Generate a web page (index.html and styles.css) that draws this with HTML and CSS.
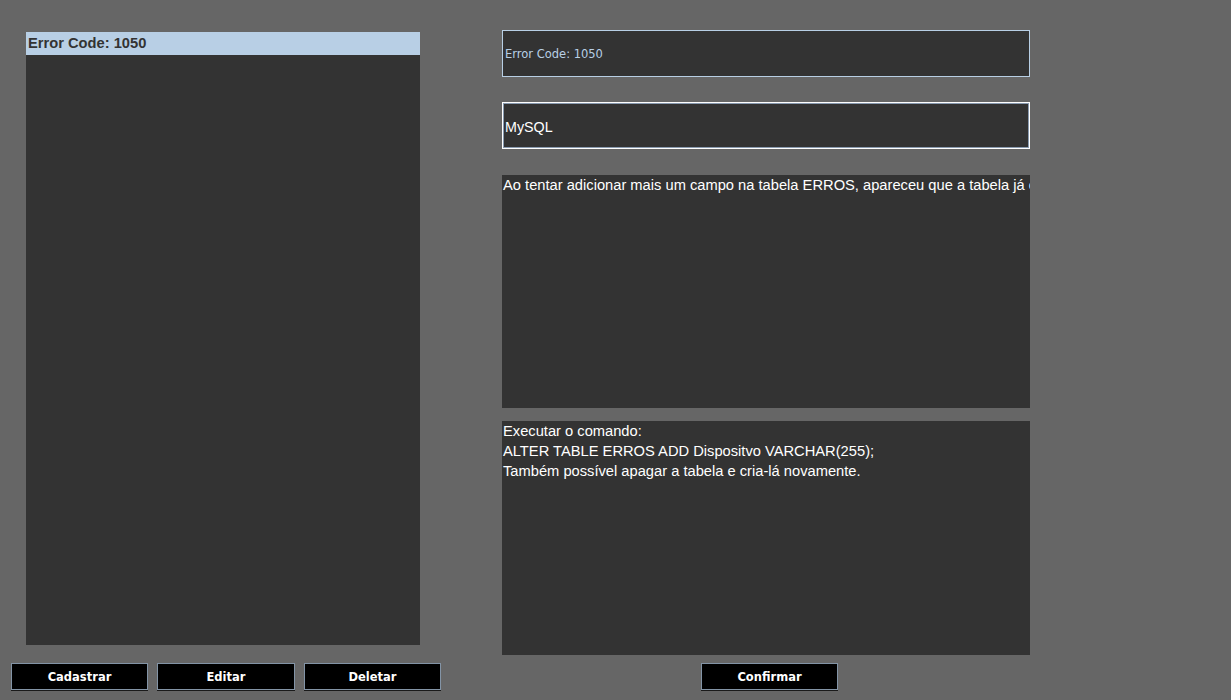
FILE: index.html
```html
<!DOCTYPE html>
<html lang="pt">
<head>
<meta charset="utf-8">
<title>Erros</title>
<link rel="stylesheet" href="styles.css">
</head>
<body>
<div class="app">
  <div class="left">
    <ul class="list">
      <li class="item selected">Error Code: 1050</li>
    </ul>
    <div class="buttons">
      <button class="btn">Cadastrar</button>
      <button class="btn">Editar</button>
      <button class="btn">Deletar</button>
    </div>
  </div>
  <div class="right">
    <div class="field field-code">Error Code: 1050</div>
    <div class="field field-tech">MySQL</div>
    <div class="area area-desc">Ao tentar adicionar mais um campo na tabela ERROS, apareceu que a tabela já existia, e não foi possível alterar a estrutura.</div>
    <div class="area area-sol">Executar o comando:
ALTER TABLE ERROS ADD Dispositvo VARCHAR(255);
Também possível apagar a tabela e cria-lá novamente.</div>
    <div class="confirm-row">
      <button class="btn">Confirmar</button>
    </div>
  </div>
</div>
</body>
</html>
```

FILE: styles.css
```css
html, body {
  margin: 0;
  padding: 0;
  background: #666666;
  width: 1231px;
  height: 700px;
  overflow: hidden;
}

.app {
  display: flex;
  align-items: flex-start;
  font-family: "Liberation Sans", Arial, sans-serif;
}

.left {
  display: flex;
  flex-direction: column;
  width: 441px;
}

.list {
  list-style: none;
  margin: 32px 0 0 26px;
  padding: 0;
  width: 394px;
  height: 613px;
  background: #333333;
}

.item {
  height: 23px;
  line-height: 23px;
  padding-left: 2px;
  font-size: 14.7px;
  font-weight: bold;
  color: #333333;
}

.item.selected {
  background: #b8cfe5;
}

.buttons {
  display: flex;
  gap: 9px;
  margin-top: 18px;
  padding-left: 11px;
}

.btn {
  box-sizing: border-box;
  width: 137px;
  height: 27px;
  margin: 0;
  padding: 0;
  background: #000000;
  border: 1px solid #8394a6;
  box-shadow: 0 1px 0 #1a1a1a;
  color: #ffffff;
  font-family: "DejaVu Sans", Tahoma, sans-serif;
  font-size: 11.5px;
  font-weight: bold;
}

.buttons .btn:nth-child(2) {
  width: 138px;
}

.right {
  display: flex;
  flex-direction: column;
  width: 528px;
  margin-left: 61px;
  padding-top: 30px;
}

.field {
  box-sizing: border-box;
  height: 47px;
  display: flex;
  align-items: center;
  background: #333333;
}

.field-code {
  border: 1px solid #b8cfe5;
  padding-left: 2px;
  color: #b8cfe5;
  font-family: "DejaVu Sans", Tahoma, sans-serif;
  font-size: 11.5px;
}

.field-tech {
  margin-top: 25px;
  border: 1px solid #ffffff;
  box-shadow: inset 0 0 0 1px #8a9bb0;
  padding: 3px 0 0 2px;
  color: #ffffff;
  font-size: 14.3px;
}

.area {
  box-sizing: border-box;
  background: #333333;
  color: #ffffff;
  font-size: 14.7px;
  line-height: 20px;
  white-space: pre;
  overflow: hidden;
  padding: 0 0 0 1px;
}

.area-desc {
  margin-top: 26px;
  height: 233px;
}

.area-sol {
  margin-top: 13px;
  height: 234px;
}

.confirm-row {
  display: flex;
  margin-top: 8px;
  padding-left: 199px;
}
```
